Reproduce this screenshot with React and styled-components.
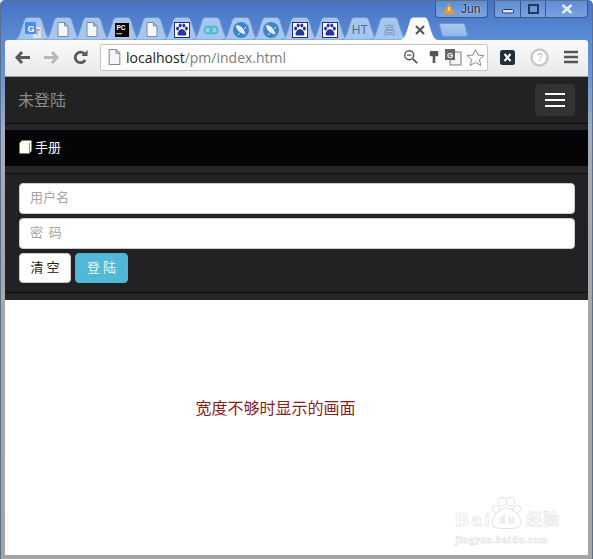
import React from 'react'
import styled, { createGlobalStyle } from 'styled-components'

const cjk = '"Noto Sans CJK SC", "Liberation Sans", sans-serif'

const Global = createGlobalStyle`
  html, body {
    margin: 0;
    padding: 0;
    background: #fff;
  }
  * {
    box-sizing: border-box;
  }
`

const Frame = styled.div`
  position: relative;
  width: 593px;
  height: 559px;
  display: flex;
  flex-direction: column;
  overflow: hidden;
  padding: 0 4px 4px 4px;
  border-radius: 5px 5px 0 0;
  border: 1px solid #5a6f90;
  border-width: 1px 1px 0 1px;
  background: linear-gradient(180deg, #4674c4 0, #5d8cd6 40px, #6b94d4 76px, #a3adc0 130px, #a9a9a9 200px, #a4a4a4 100%);
  font-family: ${cjk};
`

const TabStrip = styled.div`
  display: flex;
  align-items: flex-end;
  padding-left: 8px;
  height: 39px;
  flex-shrink: 0;
`

const TabItem = styled.div`
  position: relative;
  width: 40px;
  height: 23px;
  margin-right: -10.3px;
  display: flex;
  align-items: center;
  justify-content: center;
  z-index: ${p => (p.$active ? 2 : 1)};
`

const TabBack = styled.svg`
  position: absolute;
  left: 0;
  top: 0;
  width: 100%;
  height: 100%;
`

const TabLabel = styled.span`
  position: relative;
  font-family: "Liberation Sans", ${cjk};
  font-size: 12px;
  color: ${p => p.$color};
  padding-top: 2px;
`

const IconSlot = styled.span`
  position: relative;
  display: flex;
  padding: 2px 0 0 ${p => (p.$nudge ? 1 : 0)}px;
`

const NewTab = styled.div`
  width: 27px;
  height: 14px;
  margin: 0 0 3px 11px;
  background: linear-gradient(180deg, #a9c8f0, #8fb6ea);
  border: 1px solid #6d95d0;
  border-radius: 3px;
  transform: skewX(14deg);
`

const Controls = styled.div`
  position: absolute;
  top: -1px;
  right: 4px;
  display: flex;
  align-items: flex-start;
  gap: 6px;
`

const ProfileBadge = styled.div`
  width: 53px;
  height: 18px;
  display: flex;
  align-items: center;
  gap: 6px;
  padding-left: 7px;
  border: 1px solid #35588f;
  border-top: 0;
  border-radius: 0 0 4px 4px;
  background: linear-gradient(180deg, #5c8bd3, #7ba4e0);
  font: 12px "Liberation Sans", sans-serif;
  color: #16233c;
  text-shadow: 0 0 2px #fff;
`

const WindowButtons = styled.div`
  display: flex;
  height: 18px;
  border: 1px solid #35588f;
  border-top: 0;
  border-radius: 0 0 4px 4px;
  background: linear-gradient(180deg, #5c8bd3, #7ba4e0);
`

const WindowButton = styled.div`
  width: ${p => p.$width}px;
  display: flex;
  align-items: center;
  justify-content: center;
  padding-top: ${p => p.$drop || 0}px;
  & + & {
    border-left: 1px solid #35588f;
  }
`

const Toolbar = styled.div`
  height: 37px;
  flex-shrink: 0;
  display: flex;
  align-items: center;
  padding: 0 9px 2px 10px;
  border-radius: 3px 3px 0 0;
  background: linear-gradient(180deg, #fbfbfb, #e9e9e9);
  border-bottom: 1px solid #9a9a9a;
`

const NavButtons = styled.div`
  display: flex;
  align-items: center;
  gap: 14px;
  width: 85px;
  flex-shrink: 0;
`

const Omnibox = styled.div`
  width: 388px;
  height: 27px;
  flex-shrink: 0;
  display: flex;
  align-items: center;
  padding: 0 2px 0 7px;
  background: #fff;
  border: 1px solid #c6c6c6;
  border-radius: 2px;
`

const Url = styled.div`
  flex: 1;
  margin-left: 5px;
  font: 14px "Open Sans", "Liberation Sans", sans-serif;
  color: #7d7d7d;
  b {
    font-weight: 400;
    color: #222;
  }
`

const OmniIcons = styled.div`
  display: flex;
  align-items: center;
  gap: 4px;
  svg:first-child {
    margin-right: 5px;
  }
`

const ToolIcons = styled.div`
  flex: 1;
  display: flex;
  align-items: center;
  justify-content: space-between;
  padding: 0 1px 0 12px;
`

const Page = styled.div`
  flex: 1;
  display: flex;
  flex-direction: column;
  background: #fff;
`

const Navbar = styled.div`
  height: 47px;
  display: flex;
  align-items: center;
  justify-content: space-between;
  padding: 0 13px;
  background: #222224;
  border-bottom: 1px solid #0c0c0c;
`

const Brand = styled.div`
  font-size: 16px;
  color: #8a8a8a;
  padding-bottom: 2px;
`

const Toggle = styled.div`
  width: 40px;
  height: 32px;
  display: flex;
  flex-direction: column;
  align-items: center;
  justify-content: center;
  gap: 4px;
  background: #333335;
  border-radius: 4px;
  span {
    display: block;
    width: 20px;
    height: 2px;
    background: #fff;
  }
`

const Gutter = styled.div`
  height: ${p => p.$height}px;
  background: #262628;
  border-bottom: ${p => (p.$line ? '1px solid #0c0c0c' : 0)};
`

const ManualBar = styled.div`
  height: 36px;
  display: flex;
  align-items: center;
  gap: 3px;
  padding: 0 0 3px 14px;
  background: #050507;
  color: #fff;
  font-size: 13px;
`

const Form = styled.div`
  height: 119px;
  display: flex;
  flex-direction: column;
  gap: 4px;
  padding: 9px 13px 0 14px;
  background: #222224;
  border-bottom: 1px solid #0c0c0c;
`

const Field = styled.input`
  height: 31px;
  width: 100%;
  padding: 0 10px 5px;
  border: 1px solid #ccc;
  border-radius: 4px;
  background: #fff;
  font-family: ${cjk};
  font-size: 13px;
  outline: none;
  &::placeholder {
    color: #a4a4a4;
    opacity: 1;
  }
`

const Buttons = styled.div`
  display: flex;
  gap: 4px;
`

const Button = styled.button`
  width: ${p => p.$width}px;
  height: 30px;
  padding: 0 0 3px;
  border: 1px solid ${p => (p.$info ? '#46b8da' : '#ccc')};
  border-radius: 4px;
  background: ${p => (p.$info ? '#52b8d8' : '#fff')};
  color: ${p => (p.$info ? '#e8f8fc' : '#222')};
  font-family: ${cjk};
  font-size: 13px;
`

const Content = styled.div`
  position: relative;
  flex: 1;
  display: flex;
  align-items: center;
  justify-content: center;
  padding: 0 42px 42px 0;
  color: #8b1c1c;
  font-size: 16px;
`

const Watermark = styled.div`
  position: absolute;
  right: 27px;
  bottom: 9px;
  width: 106px;
  color: #fff;
  -webkit-text-stroke: 0.6px #e2e2e2;
`

const MarkRow = styled.div`
  display: flex;
  align-items: center;
  height: 36px;
  font: 700 19px/18px "Liberation Sans", sans-serif;
  letter-spacing: 2.5px;
  span {
    padding-top: 14px;
    width: 35px;
  }
  svg {
    flex-shrink: 0;
  }
  small {
    font: 700 16px/18px ${cjk};
    letter-spacing: 1px;
    margin-left: 3px;
    padding-top: 10px;
  }
`

const MarkUrl = styled.div`
  margin-top: 3px;
  font: 700 10.5px/12px "Liberation Serif", serif;
  letter-spacing: 0.55px;
  white-space: nowrap;
`

const TabShape = ({ active }) => (
  <TabBack viewBox="0 0 40 24" preserveAspectRatio="none">
    <path
      d="M1 24 C5 23 6 20 8 14 L11 4 C12 1 13 0.5 16 0.5 H24 C27 0.5 28 1 29 4 L32 14 C34 20 35 23 39 24 Z"
      fill={active ? '#fbfbfb' : '#a6c6ee'}
      stroke={active ? 'none' : '#6f97d2'}
    />
  </TabBack>
)

const FileIcon = ({ size = 14, color = '#7f8a99' }) => (
  <svg width={size - 2} height={size + 1} viewBox="0 0 12 15">
    <path d="M1 .5H7.5L11 4V14.5H1Z M7.5 .5V4H11" fill="#f3f6fb" stroke={color} />
  </svg>
)

const TranslateFav = () => (
  <svg width="16" height="16" viewBox="0 0 16 16">
    <rect x="8" y="5" width="8" height="11" fill="#dfe4ea" />
    <rect x="0" y="0" width="11" height="12" rx="1" fill="#4b8af0" />
    <text x="2.5" y="9.5" fontSize="9" fontWeight="700" fill="#fff" fontFamily="Liberation Sans">G</text>
    <path d="M10 8h5M12 7v6" stroke="#8c8c8c" fill="none" />
  </svg>
)

const PcFav = () => (
  <svg width="14" height="14" viewBox="0 0 15 15">
    <rect width="15" height="15" fill="#050505" />
    <text x="1.5" y="7.5" fontSize="7" fontWeight="700" fill="#fff" fontFamily="Liberation Sans">PC</text>
    <rect x="1.5" y="11" width="6" height="1" fill="#fff" />
  </svg>
)

const Paw = ({ fill = '#2932a8' }) => (
  <>
    <ellipse cx="3.6" cy="6.6" rx="1.5" ry="2" fill={fill} />
    <ellipse cx="6.2" cy="3.6" rx="1.5" ry="2" fill={fill} />
    <ellipse cx="9.8" cy="3.6" rx="1.5" ry="2" fill={fill} />
    <ellipse cx="12.4" cy="6.6" rx="1.5" ry="2" fill={fill} />
    <path d="M8 7 C10 7 12.5 10 12.5 12 C12.5 14 10 13.5 8 13.5 C6 13.5 3.5 14 3.5 12 C3.5 10 6 7 8 7Z" fill={fill} />
  </>
)

const PawFav = () => (
  <svg width="16" height="16" viewBox="0 0 16 16">
    <rect x=".5" y=".5" width="15" height="15" fill="#fff" stroke="#1e2f8f" />
    <Paw />
  </svg>
)

const InfinityFav = () => (
  <svg width="16" height="10" viewBox="0 0 16 10">
    <circle cx="5" cy="5" r="3.6" fill="none" stroke="#45bcd0" strokeWidth="2" />
    <circle cx="11" cy="5" r="3.6" fill="none" stroke="#45bcd0" strokeWidth="2" />
  </svg>
)

const RocketFav = () => (
  <svg width="16" height="16" viewBox="0 0 16 16">
    <circle cx="8" cy="8" r="8" fill="#3f86cf" />
    <path d="M3 3 C7 3 11 6 12.5 12.5 C6 11 3 7 3 3Z" fill="#e8f1fa" />
    <path d="M7 11 L5 13 M11 7 L13 5" stroke="#e8f1fa" />
  </svg>
)

const tabs = [
  <TranslateFav />,
  <FileIcon />,
  <FileIcon />,
  <PcFav />,
  <FileIcon />,
  <PawFav />,
  <InfinityFav />,
  <RocketFav />,
  <RocketFav />,
  <PawFav />,
  <PawFav />,
]

const Back = () => (
  <svg width="15" height="13" viewBox="0 0 15 13">
    <path d="M7 1 L2 6.5 L7 12 M3 6.5 H15" fill="none" stroke="#5a5a5a" strokeWidth="3" />
  </svg>
)

const Forward = () => (
  <svg width="15" height="13" viewBox="0 0 15 13">
    <path d="M8 1 L13 6.5 L8 12 M12 6.5 H0" fill="none" stroke="#b8b8b8" strokeWidth="3" />
  </svg>
)

const Reload = () => (
  <svg width="15" height="15" viewBox="0 0 16 16">
    <path d="M13 10.5 A5.6 5.6 0 1 1 12 4" fill="none" stroke="#5a5a5a" strokeWidth="3" />
    <path d="M9 6.5 H15.5 V0Z" fill="#5a5a5a" />
  </svg>
)

export default function App() {
  return (
    <Frame>
      <Global />
      <TabStrip>
        {tabs.map((icon, i) => (
          <TabItem key={i}>
            <TabShape />
            <IconSlot>{icon}</IconSlot>
          </TabItem>
        ))}
        <TabItem>
          <TabShape />
          <TabLabel $color="#4f6f98">HT</TabLabel>
        </TabItem>
        <TabItem>
          <TabShape />
          <TabLabel $color="#7e97b8">高</TabLabel>
        </TabItem>
        <TabItem $active>
          <TabShape active />
          <IconSlot $nudge>
            <svg width="10" height="10" viewBox="0 0 10 10">
              <path d="M1 1 L9 9 M9 1 L1 9" stroke="#555" strokeWidth="2" />
            </svg>
          </IconSlot>
        </TabItem>
        <NewTab />
      </TabStrip>
      <Controls>
        <ProfileBadge>
          <svg width="12" height="11" viewBox="0 0 12 11">
            <path d="M6 0 L12 11 H0Z" fill="#e89a2c" />
            <rect x="5.3" y="4" width="1.4" height="4" fill="#fff3d8" />
          </svg>
          Jun
        </ProfileBadge>
        <WindowButtons>
          <WindowButton $width={25} $drop={5}>
            <svg width="12" height="6" viewBox="0 0 12 6">
              <rect x=".5" y="1.5" width="11" height="3.5" rx="1" fill="#dfe8f5" stroke="#24395f" />
            </svg>
          </WindowButton>
          <WindowButton $width={25}>
            <svg width="11" height="10" viewBox="0 0 11 10">
              <rect x="1" y="1" width="9" height="8" fill="none" stroke="#24395f" strokeWidth="2" />
            </svg>
          </WindowButton>
          <WindowButton $width={42}>
            <svg width="12" height="10" viewBox="0 0 12 10">
              <path d="M1.5 1 L10.5 9 M10.5 1 L1.5 9" stroke="#e6edf8" strokeWidth="2.4" />
            </svg>
          </WindowButton>
        </WindowButtons>
      </Controls>
      <Toolbar>
        <NavButtons>
          <Back />
          <Forward />
          <Reload />
        </NavButtons>
        <Omnibox>
          <FileIcon size={15} color="#8a8a8a" />
          <Url><b>localhost</b>/pm/index.html</Url>
          <OmniIcons>
            <svg width="16" height="16" viewBox="0 0 18 18">
              <circle cx="7" cy="7" r="5" fill="none" stroke="#555" strokeWidth="1.6" />
              <path d="M4.5 7H9.5" stroke="#555" strokeWidth="1.4" />
              <path d="M11 11 L16 16" stroke="#555" strokeWidth="2" />
            </svg>
            <svg width="12" height="16" viewBox="0 0 14 18">
              <rect x="2" y="2" width="10" height="6" rx="1" fill="#555" />
              <rect x="5.5" y="7" width="3" height="9" fill="#555" />
            </svg>
            <svg width="18" height="18" viewBox="0 0 18 18">
              <rect x="6" y="4" width="11" height="13" fill="#f5f5f5" stroke="#777" />
              <rect x="1" y="1" width="10" height="11" fill="#666" />
              <text x="3" y="10" fontSize="8" fontWeight="700" fill="#fff" fontFamily="Liberation Sans">G</text>
            </svg>
            <svg width="19" height="19" viewBox="0 0 19 19">
              <path d="M9.5 1.5 L12 7 L18 7.6 L13.4 11.6 L14.8 17.5 L9.5 14.4 L4.2 17.5 L5.6 11.6 L1 7.6 L7 7Z" fill="#fff" stroke="#8a8a8a" />
            </svg>
          </OmniIcons>
        </Omnibox>
        <ToolIcons>
          <svg width="15" height="15" viewBox="0 0 15 15">
            <rect width="15" height="15" rx="2.5" fill="#22303c" />
            <path d="M4.5 4 L10.5 11 M10.5 4 L4.5 11" stroke="#fff" strokeWidth="2" />
          </svg>
          <svg width="19" height="19" viewBox="0 0 19 19">
            <circle cx="9.5" cy="9.5" r="8" fill="#fff" stroke="#c8c8c8" strokeWidth="2.4" />
            <text x="7" y="13" fontSize="10" fill="#b5b5b5" fontFamily="Liberation Sans">?</text>
          </svg>
          <svg width="14" height="14" viewBox="0 0 14 14">
            <path d="M0 2H14 M0 7H14 M0 12H14" stroke="#555" strokeWidth="2.4" />
          </svg>
        </ToolIcons>
      </Toolbar>
      <Page>
        <Navbar>
          <Brand>未登陆</Brand>
          <Toggle>
            <span />
            <span />
            <span />
          </Toggle>
        </Navbar>
        <Gutter $height={6} />
        <ManualBar>
          <svg width="13" height="14" viewBox="0 0 13 14">
            <path d="M3 0.5 H12.5 V11 L10 13.5 H1 C.5 13.5 .5 13 .5 12.5 V3Z" fill="#fdfdf2" />
            <path d="M10.5 3 V13.5" stroke="#8b8b80" />
          </svg>
          手册
        </ManualBar>
        <Gutter $height={8} $line />
        <Form>
          <Field placeholder="用户名" />
          <Field placeholder="密  码" />
          <Buttons>
            <Button $width={52}>清 空</Button>
            <Button $width={53} $info>登 陆</Button>
          </Buttons>
        </Form>
        <Gutter $height={7} />
        <Content>
          宽度不够时显示的画面
          <Watermark>
            <MarkRow>
              <span>Bai</span>
              <svg width="33" height="36" viewBox="0 0 32 34">
                <g fill="#fff" stroke="#e2e2e2" strokeWidth="1">
                  <circle cx="6" cy="13" r="3.6" />
                  <circle cx="12" cy="6" r="4" />
                  <circle cx="20" cy="6" r="4" />
                  <circle cx="26" cy="13" r="3.6" />
                  <path d="M16 12 C22 12 30 20 30 26 C30 33 22 32 16 32 C10 32 2 33 2 26 C2 20 10 12 16 12Z" />
                </g>
                <text x="9" y="27" fontSize="10" fontFamily="Liberation Sans" fill="#fff" stroke="#dcdcdc" strokeWidth="0.5">du</text>
              </svg>
              <small>经验</small>
            </MarkRow>
            <MarkUrl>jingyan.baidu.com</MarkUrl>
          </Watermark>
        </Content>
      </Page>
    </Frame>
  )
}
